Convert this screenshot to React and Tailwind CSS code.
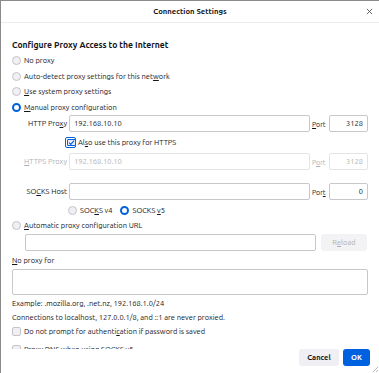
import React from "react";

const font = { fontFamily: '"Ubuntu", "Noto Sans", "Open Sans", sans-serif' };

function Radio({ checked, className = "" }) {
  return checked ? (
    <span className={"inline-block w-[9px] h-[9px] rounded-full border-[2.5px] border-[#0061e0] bg-white shrink-0 " + className} />
  ) : (
    <span className={"inline-block w-[9px] h-[9px] rounded-full border border-[#c4c4c8] bg-[#f0f0f4] shrink-0 " + className} />
  );
}

function Field({ value, disabled, className = "", right }) {
  return (
    <div
      className={
        "h-[17px] border rounded-[2px] flex items-center px-[4px] text-[7.5px] shrink-0 " +
        (disabled ? "border-[#e4e4e8] text-[#b0b0b4]" : "border-[#c8c8cc] text-[#15141a]") +
        (right ? " justify-end" : "") +
        " " +
        className
      }
    >
      {value}
    </div>
  );
}

function ProxyRow({ label, value, port, disabled, portLabel }) {
  return (
    <div className="flex items-center">
      <div className={"w-[57px] shrink-0 text-right pr-[2px] text-[7.5px] " + (disabled ? "text-[#b0b0b4]" : "")}>
        {label}
      </div>
      <Field value={value} disabled={disabled} className="w-[241px]" />
      <div className={"w-[19px] shrink-0 pl-[2px] text-[7px] " + (disabled ? "text-[#b0b0b4]" : "")}>{portLabel}</div>
      <Field value={port} disabled={disabled} right className="w-[39px]" />
    </div>
  );
}

function Check() {
  return <span className="w-[9px] h-[9px] rounded-[2px] border border-[#c4c4c8] bg-[#f0f0f4] shrink-0" />;
}

export default function App() {
  return (
    <div style={font} className="w-[379px] h-[373px] bg-white text-[#15141a] border-t border-l border-[#8a8a8a] flex flex-col overflow-hidden relative">
      {/* header */}
      <div className="h-[22px] shrink-0 flex items-center justify-center relative border-b border-[#ececec]">
        <span className="text-[7.7px] font-bold">Connection Settings</span>
        <svg viewBox="0 0 8 8" className="absolute right-[6px] top-[7px] w-[7px] h-[7px]">
          <path d="M1 1 L7 7 M7 1 L1 7" stroke="#555" strokeWidth="1" />
        </svg>
      </div>

      <div className="h-[326px] shrink-0 overflow-hidden px-[11px] pt-[18px] text-[7.5px]">
        <div className="text-[8.6px] font-bold leading-none mb-[6px]">Configure Proxy Access to the Internet</div>

        <div className="flex flex-col gap-[5.6px]">
          <div className="flex items-center gap-[3px] h-[10px]"><Radio /><span>No proxy</span></div>
          <div className="flex items-center gap-[3px] h-[10px]"><Radio /><span>Auto-detect proxy settings for this net<u>w</u>ork</span></div>
          <div className="flex items-center gap-[3px] h-[10px]"><Radio /><span><u>U</u>se system proxy settings</span></div>
          <div className="flex items-center gap-[3px] h-[10px]"><Radio checked /><span><u>M</u>anual proxy configuration</span></div>
        </div>

        <div className="mt-[3px] flex flex-col">
          <ProxyRow label={<span>HTTP Pro<u>x</u>y</span>} value="192.168.10.10" port="3128" portLabel={<span><u>P</u>ort</span>} />
          <div className="flex items-center gap-[2px] pl-[53px] h-[21px]">
            <span className="w-[11px] h-[11px] rounded-[2px] border border-[#0061e0] p-[1px] flex">
              <span className="flex-1 rounded-[1px] bg-[#e6eefc] border border-[#0061e0] flex items-center justify-center">
                <svg viewBox="0 0 10 10" className="w-[7px] h-[7px]">
                  <path d="M1.5 5.2 L4 7.6 L8.6 2.4" fill="none" stroke="#0061e0" strokeWidth="1.6" />
                </svg>
              </span>
            </span>
            <span>Al<u>s</u>o use this proxy for HTTPS</span>
          </div>
          <ProxyRow disabled label={<span><u>H</u>TTPS Proxy</span>} value="192.168.10.10" port="3128" portLabel={<span>P<u>o</u>rt</span>} />
          <div className="h-[13px]" />
          <ProxyRow label={<span>SO<u>C</u>KS Host</span>} value="" port="0" portLabel={<span>Por<u>t</u></span>} />
          <div className="flex items-center pl-[56px] h-[21px] gap-[3px]">
            <Radio /><span>SOC<u>K</u>S v4</span>
            <Radio checked className="ml-[5px]" /><span>SOCKS <u>v</u>5</span>
          </div>
        </div>

        <div className="flex items-center gap-[3px] h-[11px] mt-[-1px]"><Radio /><span><u>A</u>utomatic proxy configuration URL</span></div>
        <div className="flex items-center mt-[3px] pl-[13px]">
          <Field value="" className="w-[291px]" />
          <div className="ml-[5px] w-[46px] h-[17px] rounded-[3px] bg-[#f3f3f5] text-[#b0b0b4] flex items-center justify-center">R<u>e</u>load</div>
        </div>

        <div className="mt-[4px] h-[10px] flex items-center"><span><u>N</u>o proxy for</span></div>
        <div className="mt-[4px] h-[26px] w-[356px] border border-[#c8c8cc] rounded-[2px]" />

        <div className="mt-[2px] h-[12px] flex items-center">Example: .mozilla.org, .net.nz, 192.168.1.0/24</div>
        <div className="mt-[2px] h-[12px] flex items-center">Connections to localhost, 127.0.0.1/8, and ::1 are never proxied.</div>
        <div className="mt-[3px] flex items-center gap-[3px] h-[11px]">
          <Check />
          <span>Do not prompt for authenti<u>c</u>ation if password is saved</span>
        </div>
        <div className="mt-[7px] flex items-center gap-[3px] h-[11px]">
          <Check />
          <span>Proxy <u>D</u>NS when using SOCKS v5</span>
        </div>
      </div>

      <div className="flex justify-end items-center gap-[4px] pr-[9px]">
        <div className="w-[40px] h-[17px] rounded-[3px] bg-[#f0f0f4] text-[7.5px] font-bold flex items-center justify-center">Cancel</div>
        <div className="w-[27px] h-[17px] rounded-[3px] bg-[#0061e0] text-white text-[7.5px] font-bold flex items-center justify-center">OK</div>
      </div>

      <svg viewBox="0 0 6 6" className="absolute right-[1px] bottom-[1px] w-[6px] h-[6px]">
        <path d="M6 1 L1 6 M6 4 L4 6" stroke="#aaa" strokeWidth="0.8" />
      </svg>
    </div>
  );
}
